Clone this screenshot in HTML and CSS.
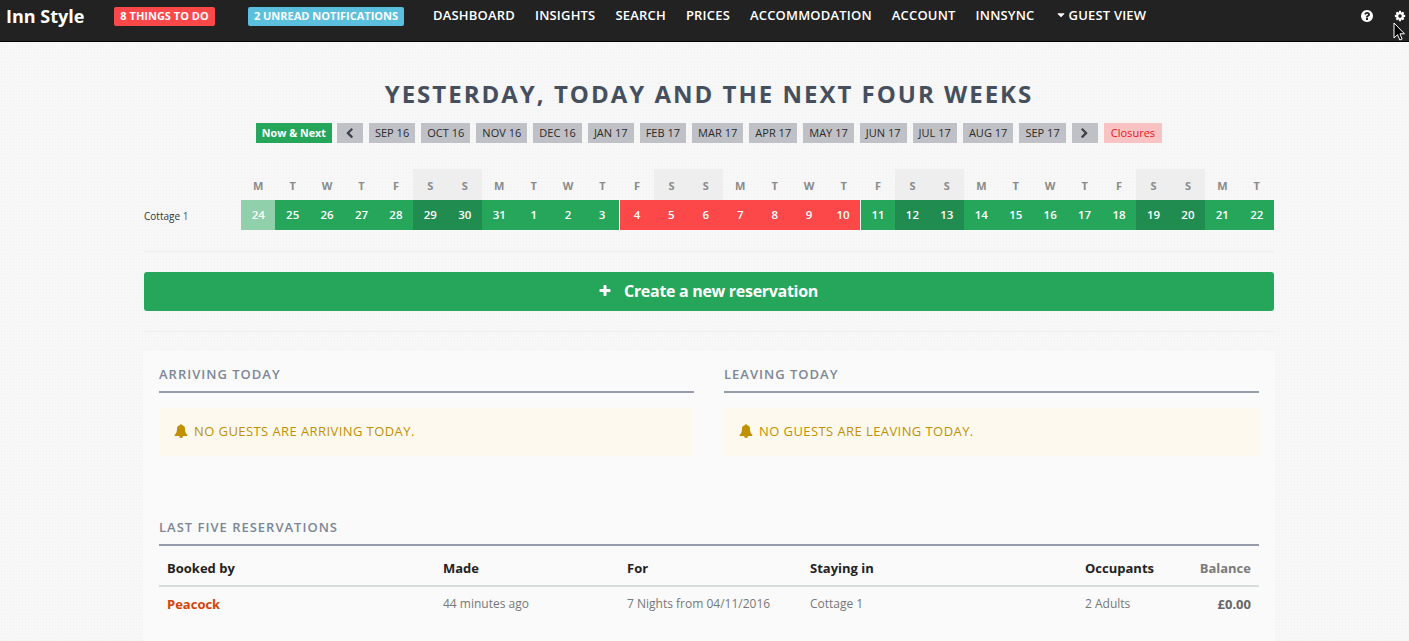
FILE: index.html
```html
<!DOCTYPE html>
<html lang="en">
<head>
<meta charset="utf-8">
<title>Inn Style</title>
<link rel="stylesheet" href="styles.css">
</head>
<body>
<svg class="defs" width="0" height="0" aria-hidden="true">
  <symbol id="i-left" viewBox="0 0 1792 1792"><path d="M1427 301l-531 531 531 531q19 19 19 45t-19 45l-166 166q-19 19-45 19t-45-19l-742-742q-19-19-19-45t19-45l742-742q19-19 45-19t45 19l166 166q19 19 19 45t-19 45z"/></symbol>
  <symbol id="i-right" viewBox="0 0 1792 1792"><path d="M1363 877l-742 742q-19 19-45 19t-45-19l-166-166q-19-19-19-45t19-45l531-531-531-531q-19-19-19-45t19-45l166-166q19-19 45-19t45 19l742 742q19 19 19 45t-19 45z"/></symbol>
  <symbol id="i-bell" viewBox="0 0 1792 1792"><path d="M912 1696q0-16-16-16-59 0-101.500-42.500t-42.500-101.500q0-16-16-16t-16 16q0 73 51.500 124.500t124.500 51.500q16 0 16-16zm816-288q0 52-38 90t-90 38h-448q0 106-75 181t-181 75-181-75-75-181h-448q-52 0-90-38t-38-90q50-42 91-88t85-119.500 74.500-158.500 50-206 19.500-260q0-152 117-282.500t307-158.500q-8-19-8-39 0-40 28-68t68-28 68 28 28 68q0 20-8 39 190 28 307 158.500t117 282.500q0 139 19.500 260t50 206 74.500 158.500 85 119.500 91 88z"/></symbol>
</svg>

<header class="topbar">
  <a class="brand">Inn Style</a>
  <span class="badge badge-red">8 THINGS TO DO</span>
  <span class="badge badge-blue">2 UNREAD NOTIFICATIONS</span>
  <nav class="mainnav">
    <a>DASHBOARD</a>
    <a>INSIGHTS</a>
    <a>SEARCH</a>
    <a>PRICES</a>
    <a>ACCOMMODATION</a>
    <a>ACCOUNT</a>
    <a>INNSYNC</a>
    <a class="guest"><svg class="caret" viewBox="0 0 1792 1792"><path d="M1408 704q0 26-19 45l-448 448q-19 19-45 19t-45-19l-448-448q-19-19-19-45t19-45 45-19h896q26 0 45 19t19 45z"/></svg>GUEST VIEW</a>
  </nav>
  <div class="tools">
    <svg class="tool-help" viewBox="0 0 1792 1792"><path d="M1024 1376v-192q0-14-9-23t-23-9h-192q-14 0-23 9t-9 23v192q0 14 9 23t23 9h192q14 0 23-9t9-23zm256-672q0-88-55.500-163t-138.500-116-170-41q-243 0-371 213-15 24 8 42l132 100q7 6 19 6 16 0 25-12 53-68 86-92 34-24 86-24 48 0 85.500 26t37.500 59q0 38-20 61t-68 45q-63 28-115.500 86.500t-52.500 125.500v36q0 14 9 23t23 9h192q14 0 23-9t9-23q0-19 21.500-49.500t54.500-49.500q32-18 49-28.500t46-35 44.500-48 28-60.500 12.500-81zm384 192q0 209-103 385.500t-279.500 279.500-385.500 103-385.500-103-279.500-279.500-103-385.500 103-385.500 279.500-279.500 385.500-103 385.500 103 279.500 279.500 103 385.500z"/></svg>
    <svg class="tool-gear" viewBox="0 0 1792 1792"><path d="M1152 896q0-106-75-181t-181-75-181 75-75 181 75 181 181 75 181-75 75-181zm512-109v222q0 12-8 23t-20 13l-185 28q-19 54-39 91 35 50 107 138 10 12 10 25t-9 23q-27 37-99 108t-94 71q-12 0-26-9l-138-108q-44 23-91 38-16 136-29 186-7 28-36 28h-222q-14 0-24.500-8.500t-11.500-21.500l-28-184q-49-16-90-37l-141 107q-10 9-25 9-14 0-25-11-126-114-165-168-7-10-7-23 0-12 8-23 15-21 51-66.500t54-70.500q-27-50-41-99l-183-27q-13-2-21-12.500t-8-23.500v-222q0-12 8-23t19-13l186-28q14-46 39-92-40-57-107-138-10-12-10-24 0-10 9-23 26-36 98.500-107.500t94.500-71.500q13 0 26 10l138 107q44-23 91-38 16-136 29-186 7-28 36-28h222q14 0 24.500 8.500t11.500 21.500l28 184q49 16 90 37l142-107q9-9 24-9 13 0 25 10 129 119 165 170 7 8 7 22 0 12-8 23-15 21-51 66.500t-54 70.500q26 50 41 98l183 28q13 2 21 12.500t8 23.500z"/></svg>
  </div>
  <svg class="cursor" viewBox="0 0 12 19"><path d="M1 1v15l3.500-3.300 2.300 5.300 2.400-1-2.300-5.200H11.500z" fill="#000" stroke="#fff" stroke-width="1"/></svg>
</header>

<main class="page">
  <h1 class="title">YESTERDAY, TODAY AND THE NEXT FOUR WEEKS</h1>
  <div class="months">
    <a class="mbtn mbtn-now">Now &amp; Next</a>
    <a class="mbtn mbtn-arrow"><svg class="chev"><use href="#i-left"/></svg></a>
    <a class="mbtn">SEP 16</a>
    <a class="mbtn">OCT 16</a>
    <a class="mbtn">NOV 16</a>
    <a class="mbtn">DEC 16</a>
    <a class="mbtn">JAN 17</a>
    <a class="mbtn">FEB 17</a>
    <a class="mbtn">MAR 17</a>
    <a class="mbtn">APR 17</a>
    <a class="mbtn">MAY 17</a>
    <a class="mbtn">JUN 17</a>
    <a class="mbtn">JUL 17</a>
    <a class="mbtn">AUG 17</a>
    <a class="mbtn">SEP 17</a>
    <a class="mbtn mbtn-arrow"><svg class="chev"><use href="#i-right"/></svg></a>
    <a class="mbtn mbtn-closed">Closures</a>
  </div>

  <div class="cal">
    <div class="cal-spacer"></div>
    <div class="dow">M</div><div class="dow">T</div><div class="dow">W</div><div class="dow">T</div><div class="dow">F</div><div class="dow we">S</div><div class="dow we">S</div>
    <div class="dow">M</div><div class="dow">T</div><div class="dow">W</div><div class="dow">T</div><div class="dow">F</div><div class="dow we">S</div><div class="dow we">S</div>
    <div class="dow">M</div><div class="dow">T</div><div class="dow">W</div><div class="dow">T</div><div class="dow">F</div><div class="dow we">S</div><div class="dow we">S</div>
    <div class="dow">M</div><div class="dow">T</div><div class="dow">W</div><div class="dow">T</div><div class="dow">F</div><div class="dow we">S</div><div class="dow we">S</div>
    <div class="dow">M</div><div class="dow">T</div>

    <div class="cal-label">Cottage <span class="cal-num">1</span></div>
    <div class="day past">24</div><div class="day">25</div><div class="day">26</div><div class="day">27</div><div class="day">28</div><div class="day dark">29</div><div class="day dark">30</div>
    <div class="day">31</div><div class="day">1</div><div class="day">2</div><div class="day edge">3</div><div class="day booked">4</div><div class="day booked">5</div><div class="day booked">6</div>
    <div class="day booked">7</div><div class="day booked">8</div><div class="day booked">9</div><div class="day booked edge">10</div><div class="day">11</div><div class="day dark">12</div><div class="day dark">13</div>
    <div class="day">14</div><div class="day">15</div><div class="day">16</div><div class="day">17</div><div class="day">18</div><div class="day dark">19</div><div class="day dark">20</div>
    <div class="day">21</div><div class="day">22</div>
  </div>

  <div class="create-wrap">
    <a class="create"><svg class="plus" viewBox="0 0 1792 1792"><path d="M1600 736v192q0 40-28 68t-68 28h-416v416q0 40-28 68t-68 28h-192q-40 0-68-28t-28-68v-416h-416q-40 0-68-28t-28-68v-192q0-40 28-68t68-28h416v-416q0-40 28-68t68-28h192q40 0 68 28t28 68v416h416q40 0 68 28t28 68z"/></svg>Create a new reservation</a>
  </div>

  <section class="panel">
    <div class="today">
      <div class="today-col">
        <h2 class="sect">ARRIVING TODAY</h2>
        <div class="notice"><svg class="bell"><use href="#i-bell"/></svg>NO GUESTS ARE ARRIVING TODAY.</div>
      </div>
      <div class="today-col">
        <h2 class="sect">LEAVING TODAY</h2>
        <div class="notice"><svg class="bell"><use href="#i-bell"/></svg>NO GUESTS ARE LEAVING TODAY.</div>
      </div>
    </div>
    <h2 class="sect sect-last">LAST FIVE RESERVATIONS</h2>
    <table class="res">
      <thead>
        <tr><th class="c1">Booked by</th><th class="c2">Made</th><th class="c3">For</th><th class="c4">Staying in</th><th class="c5">Occupants</th><th class="c6">Balance</th></tr>
      </thead>
      <tbody>
        <tr><td><a class="guest-name">Peacock</a></td><td>44 minutes ago</td><td>7 Nights from 04/11/2016</td><td>Cottage 1</td><td>2 Adults</td><td class="bal">£0.00</td></tr>
      </tbody>
    </table>
  </section>
</main>
</body>
</html>
```
FILE: styles.css
```css
* { box-sizing: border-box; }
html, body { height: 100%; }
html { overflow: hidden; }
body {
  margin: 0;
  display: flex;
  flex-direction: column;
  font-family: "Open Sans", "Noto Sans", sans-serif;
  color: #333;
  background-color: #f7f7f7;
  background-image: radial-gradient(#f1f1f1 0.7px, transparent 0.8px);
  background-size: 3px 3px;
}
.defs { position: absolute; }

.topbar {
  position: relative;
  flex: none;
  height: 42px;
  display: flex;
  align-items: center;
  background: #222;
  border-bottom: 1px solid #000;
  padding: 0 0 8px 6px;
  color: #fff;
}
.brand { font-size: 18px; font-weight: 700; width: 108px; margin-bottom: 2px; }
.badge {
  height: 19px;
  line-height: 17px;
  border-radius: 2px;
  font-size: 11px;
  font-weight: 700;
  text-align: center;
  color: #fff;
}
.badge-red { background: #fc4848; width: 101px; margin-right: 33px; }
.badge-blue { background: #5bc0de; width: 156px; margin-right: 29px; }
.mainnav { display: flex; gap: 20px; font-size: 13px; font-weight: 600; letter-spacing: 0.19px; margin-bottom: 4px; }
.guest { display: flex; align-items: center; }
.caret { width: 12px; height: 12px; fill: #fff; margin-right: 2px; }
.tools { margin-left: auto; display: flex; align-items: center; gap: 20px; padding-right: 3px; margin-bottom: 2px; }
.tool-help { width: 14px; height: 14px; fill: #fff; }
.tool-gear { width: 12px; height: 12px; fill: #fff; }
.cursor { position: absolute; left: 1393px; top: 22px; width: 12px; height: 19px; }

.page { flex: 1; display: flex; flex-direction: column; width: 1130px; margin-left: 144px; min-height: 0; }
.title {
  margin: 38px 0 0;
  font-size: 24px;
  line-height: 28px;
  font-weight: 700;
  letter-spacing: 2px;
  text-align: center;
  color: #454f5e;
}
.months { display: flex; justify-content: center; gap: 6px; margin-top: 15px; }
.mbtn {
  height: 20px;
  line-height: 20px;
  padding: 0 6px;
  font-size: 11px;
  font-weight: 500;
  letter-spacing: 0.02px;
  background: #c0c1c6;
  color: #2a2a2a;
}
.mbtn-now { background: #26a65b; color: #fff; font-weight: 700; font-size: 10.7px; margin-right: -1px; }
.mbtn-arrow { width: 26px; display: flex; align-items: center; justify-content: center; }
.chev { width: 11px; height: 11px; fill: #3c4048; }
.mbtn-closed { background: #f9c3c3; color: #e8141e; padding: 0 7px; }

.cal {
  display: grid;
  grid-template-columns: 97px repeat(30, 1fr);
  grid-template-rows: 31px 30px;
  margin-top: 26px;
  padding-bottom: 21px;
  border-bottom: 1px solid #eee;
}
.dow {
  display: flex;
  align-items: center;
  justify-content: center;
  padding-top: 1px;
  font-size: 11px;
  font-weight: 700;
  color: #8b8b8b;
}
.dow.we { background: #eee; }
.cal-label { align-self: center; padding-top: 1px; font-size: 10px; color: #333; }
.cal-num { color: #556; }
.day {
  display: flex;
  align-items: center;
  justify-content: center;
  padding-bottom: 1px;
  font-size: 11.5px;
  font-weight: 600;
  color: #fff;
  background: #26a65b;
}
.day.past { background: #90d1ab; }
.day.dark { background: #218c4f; }
.day.booked { background: #fc4848; }
.day.edge { border-right: 1px solid #fff; }

.create-wrap { padding: 20px 0; border-bottom: 1px solid #eee; }
.create {
  height: 39px;
  display: flex;
  align-items: center;
  justify-content: center;
  padding: 0 2px 2px 0;
  border-radius: 3px;
  background: #26a65b;
  color: #fff;
  font-size: 16px;
  font-weight: 700;
  letter-spacing: -0.3px;
}
.plus { width: 14px; height: 14px; fill: #fff; margin-right: 12px; }

.panel { flex: 1; margin: 19px -1px 0; padding: 15px 16px 0; background: #fafafa; }
.today { display: flex; gap: 30px; }
.today-col { flex: 1; }
.sect {
  margin: 0;
  height: 27px;
  font-size: 13px;
  line-height: 16px;
  font-weight: 600;
  letter-spacing: 1px;
  color: #7c8698;
  border-bottom: 2px solid #959dad;
}
.notice {
  display: flex;
  align-items: center;
  height: 48px;
  margin-top: 15px;
  padding: 0 0 2px 15px;
  background: #fef9ef;
  color: #c09000;
  font-size: 13px;
  letter-spacing: 0.42px;
}
.bell { width: 14px; height: 14px; fill: #c09000; margin-right: 6px; }
.sect-last { margin-top: 63px; }
.res { width: 100%; border-collapse: collapse; table-layout: fixed; font-size: 12px; }
.res th {
  height: 40px;
  padding: 4px 8px 0;
  text-align: left;
  font-size: 13px;
  font-weight: 700;
  color: #222;
  border-bottom: 2px solid #d8dcdc;
}
.res td { height: 33px; padding: 0 8px; color: #777; }
.c1 { width: 276px; }
.c2 { width: 184px; }
.c3 { width: 183px; }
.c4 { width: 275px; }
.c5 { width: 99px; }
.res .c6 { text-align: right; color: #7a7a7a; }
.res .bal { text-align: right; font-size: 13px; font-weight: 700; color: #666; padding-top: 1px; }
.guest-name { display: inline-block; padding-top: 1px; font-size: 13px; font-weight: 700; color: #d4420c; }
```
